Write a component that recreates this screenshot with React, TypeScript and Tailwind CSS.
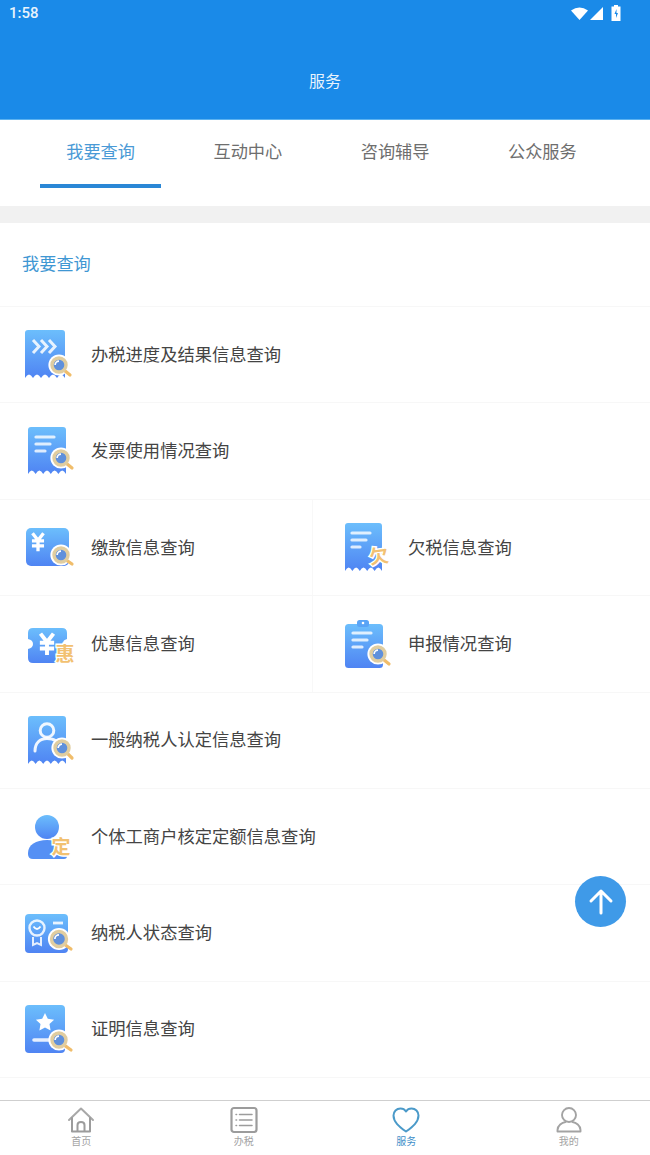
import type { ReactNode } from "react";

const tabs = ["我要查询", "互动中心", "咨询辅导", "公众服务"];
const fill = "url(#iconBlue)";

// receipt shape with a wavy bottom edge
function receiptPath(x0: number, x1: number, y0: number, y1: number) {
  const n = 5;
  const step = (x1 - x0) / n;
  let d = `M${x0 + 3} ${y0}H${x1 - 3}Q${x1} ${y0} ${x1} ${y0 + 3}V${y1}`;
  for (let i = 0; i < n; i++) {
    d += `q${-step / 2} -7 ${-step} 0`;
  }
  return d + `V${y0 + 3}Q${x0} ${y0} ${x0 + 3} ${y0}Z`;
}

function Lens({ x, y, r = 7, hx, hy }: { x: number; y: number; r?: number; hx: number; hy: number }) {
  return (
    <g>
      <circle cx={x} cy={y} r={r + 3.6} fill="#fff" />
      <line x1={x + r * 0.7} y1={y + r * 0.7} x2={hx} y2={hy} stroke="#f0bd6b" strokeWidth="3.2" strokeLinecap="round" />
      <circle cx={x} cy={y} r={r} fill="#5f90dc" stroke="#e0cda0" strokeWidth="3.4" />
      <path d={`M${x - r * 0.55} ${y}a${r * 0.55} ${r * 0.55} 0 0 1 ${r * 0.55} ${-r * 0.55}`} fill="none" stroke="#fff" strokeWidth="1.7" />
    </g>
  );
}

function Lines({ x, y, w }: { x: number; y: number[]; w: number[] }) {
  return (
    <g stroke="#fff" strokeOpacity="0.8" strokeWidth="3.2" strokeLinecap="round">
      {y.map((v, i) => (
        <line key={v} x1={x} y1={v} x2={x + w[i]} y2={v} />
      ))}
    </g>
  );
}

function Yen({ x, y, s = 1 }: { x: number; y: number; s?: number }) {
  return (
    <path
      transform={`translate(${x} ${y}) scale(${s})`}
      d="M-5 -8L0 -1.5L5 -8M-5.5 -1H5.5M-5.5 3.5H5.5M0 -1.5V8.5"
      fill="none"
      stroke="#fff"
      strokeWidth="3"
    />
  );
}

function Badge({ x, y, children, rotate = 0 }: { x: number; y: number; children: string; rotate?: number }) {
  return (
    <text
      x={x}
      y={y}
      transform={rotate ? `rotate(${rotate} ${x} ${y})` : undefined}
      textAnchor="middle"
      fontSize="19"
      fontWeight="700"
      fill="#f2c171"
      stroke="#fff"
      strokeWidth="3"
      paintOrder="stroke"
      style={{ fontFamily: '"Noto Sans CJK SC", sans-serif' }}
    >
      {children}
    </text>
  );
}

function Icon({ children }: { children: ReactNode }) {
  return (
    <svg viewBox="0 0 56 56" className="w-14 h-14 shrink-0">
      {children}
    </svg>
  );
}

const iconProgress = (
  <Icon>
    <path d={receiptPath(5, 45, 3, 51)} fill={fill} />
    <path d="M13 13l6 6.5-6 6.5M21 13l6 6.5-6 6.5M29 13l6 6.5-6 6.5" fill="none" stroke="#fff" strokeOpacity="0.85" strokeWidth="3" />
    <Lens x={39} y={38} hx={50} hy={48} />
  </Icon>
);
const iconInvoice = (
  <Icon>
    <path d={receiptPath(8, 46, 4, 51)} fill={fill} />
    <Lines x={16} y={[14, 21, 28]} w={[18, 14, 9]} />
    <Lens x={41} y={35} hx={52} hy={45} />
  </Icon>
);
const iconPayment = (
  <Icon>
    <rect x="6" y="9" width="43" height="38" rx="5" fill={fill} />
    <Yen x={18} y={23} s={1.1} />
    <Lens x={41} y={36} hx={52} hy={45} />
  </Icon>
);
const iconDiscount = (
  <Icon>
    <path
      d="M13 12H42Q47 12 47 17V23Q43 24 43 27T47 32V42Q47 47 42 47H13Q8 47 8 42V33Q13 32 13 28T8 23V17Q8 12 13 12Z"
      fill={fill}
    />
    <Yen x={27} y={28} s={1.3} />
    <Badge x={45} y={45}>惠</Badge>
  </Icon>
);
const iconOwed = (
  <Icon>
    <path d={receiptPath(8, 45, 4, 52)} fill={fill} />
    <Lines x={15} y={[14, 21, 28]} w={[18, 14, 8]} />
    <Badge x={43} y={44} rotate={-8}>欠</Badge>
  </Icon>
);
const iconDeclare = (
  <Icon>
    <rect x="8" y="8" width="38" height="44" rx="3.5" fill={fill} />
    <rect x="20" y="4" width="12" height="7" rx="2.5" fill="#5aa4f6" />
    <circle cx="26" cy="7" r="1.3" fill="#fff" />
    <Lines x={16} y={[17, 24, 31]} w={[18, 14, 9]} />
    <Lens x={41} y={38} hx={52} hy={48} />
  </Icon>
);
const iconPerson = (
  <Icon>
    <path d={receiptPath(8, 46, 4, 52)} fill={fill} />
    <circle cx="27" cy="18.5" r="6.8" fill="none" stroke="#fff" strokeOpacity="0.9" strokeWidth="3" />
    <path d="M15 39C15 31 20 26.5 27 26.5C31 26.5 34 27.5 36 29" fill="none" stroke="#fff" strokeOpacity="0.9" strokeWidth="3" strokeLinecap="round" />
    <Lens x={42} y={36} hx={52} hy={46} />
  </Icon>
);
const iconFixed = (
  <Icon>
    <circle cx="27" cy="18" r="12" fill={fill} />
    <path d="M13 50Q8 50 8 45V44C8 36 16 31 27 31C38 31 47 36 47 44V47Q47 50 44 50Z" fill="#5590f4" />
    <Badge x={41} y={45}>定</Badge>
  </Icon>
);
const iconStatus = (
  <Icon>
    <rect x="5" y="9" width="43" height="39" rx="4" fill={fill} />
    <circle cx="17" cy="23" r="7.5" fill="none" stroke="#fff" strokeOpacity="0.85" strokeWidth="2.4" />
    <path d="M13.5 21.5q3.5 5 7 0" fill="none" stroke="#fff" strokeWidth="1.8" />
    <path d="M13 32V40L17 38L21 40V32" fill="none" stroke="#fff" strokeOpacity="0.85" strokeWidth="2" />
    <line x1="33" y1="18" x2="43" y2="18" stroke="#fff" strokeOpacity="0.85" strokeWidth="2.8" />
    <Lens x={39} y={34} r={7.5} hx={51} hy={44} />
  </Icon>
);
const iconProof = (
  <Icon>
    <rect x="5" y="4" width="40" height="48" rx="4" fill={fill} />
    <path
      d="M25 12l2.8 5.8 6.3.9-4.6 4.4 1.1 6.3-5.6-3-5.6 3 1.1-6.3-4.6-4.4 6.3-.9Z"
      fill="#fff"
    />
    <line x1="14" y1="39" x2="30" y2="39" stroke="#fff" strokeOpacity="0.85" strokeWidth="3.6" strokeLinecap="round" />
    <Lens x={39} y={39} hx={51} hy={49} />
  </Icon>
);

function Row({ icon, label }: { icon: ReactNode; label: string }) {
  return (
    <div className="flex h-[96.4px] shrink-0 items-center gap-[15px] border-b border-[#f7f7f7] pl-5">
      {icon}
      <span className="pb-[2px] text-[17.3px] text-[#444]">{label}</span>
    </div>
  );
}

function HalfRow({ left, right }: { left: [ReactNode, string]; right: [ReactNode, string] }) {
  return (
    <div className="flex h-[96.4px] shrink-0 border-b border-[#f7f7f7]">
      <div className="flex w-[313px] items-center gap-[15px] border-r border-[#f8f8f8] pl-5">
        {left[0]}
        <span className="pb-[2px] text-[17.3px] text-[#444]">{left[1]}</span>
      </div>
      <div className="flex flex-1 items-center gap-[15px] pl-6">
        {right[0]}
        <span className="pb-[2px] text-[17.3px] text-[#444]">{right[1]}</span>
      </div>
    </div>
  );
}

function NavItem({ label, active, children }: { label: string; active?: boolean; children: ReactNode }) {
  return (
    <div className="flex flex-col items-center pt-[5px]">
      <svg viewBox="0 0 28 28" className="w-7 h-7" fill="none" strokeLinejoin="round" strokeLinecap="round">
        {children}
      </svg>
      <span className={`text-[10px] leading-[14px] ${active ? "text-[#3f8fc9]" : "text-[#a3a3a3]"}`}>{label}</span>
    </div>
  );
}

export default function App() {
  return (
    <div
      className="relative flex h-[1155px] w-[650px] flex-col overflow-hidden bg-white"
      style={{ fontFamily: '"Noto Sans CJK SC", "Noto Sans", sans-serif' }}
    >
      <svg className="absolute h-0 w-0">
        <defs>
          <linearGradient id="iconBlue" x1="0" y1="0" x2="0" y2="1">
            <stop offset="0" stopColor="#6cbefc" />
            <stop offset="1" stopColor="#4f84f3" />
          </linearGradient>
        </defs>
      </svg>

      {/* header */}
      <header className="h-[120px] shrink-0 border-b border-[#5cb2f0] bg-[#1a8ae8] text-white">
        <div className="flex h-[26px] items-center justify-between pl-[9px] pr-[29px]">
          <span className="text-[15px] font-medium opacity-90" style={{ fontFamily: "Roboto, sans-serif" }}>
            1:58
          </span>
          <div className="flex items-center">
            <svg viewBox="0 0 17 13" className="h-[13px] w-[17px]">
              <path d="M0 3.5Q8.5 -2.5 17 3.5L8.5 13Z" fill="#fff" />
            </svg>
            <svg viewBox="0 0 13 13" className="ml-[2px] h-[13px] w-[13px]">
              <path d="M13 0V13H0Z" fill="#fff" />
            </svg>
            <svg viewBox="0 0 10 16" className="ml-2 h-4 w-[10px]">
              <path d="M3 0H7V1.5H9.5V16H.5V1.5H3Z" fill="#fff" />
              <path d="M5.5 4L3.5 9H5V13L7 8H5.5Z" fill="#1a8ae8" />
            </svg>
          </div>
        </div>
        <div className="mt-[25px] flex h-[58px] items-center justify-center text-[16px] opacity-90">服务</div>
      </header>

      {/* tabs */}
      <nav className="grid h-[86px] shrink-0 grid-cols-4 pl-[27px] pr-[34px]">
        {tabs.map((tab, i) => (
          <div key={tab} className="relative flex h-[64px] items-center justify-center">
            <span className={`pb-[2px] text-[17.2px] ${i === 0 ? "text-[#4a9ad6]" : "text-[#6e6e6e]"}`}>{tab}</span>
            {i === 0 && <span className="absolute left-[13px] top-[64px] h-1 w-[121px] bg-[#2a87d6]" />}
          </div>
        ))}
      </nav>
      <div className="h-[17px] shrink-0 bg-[#f1f1f1]" />

      {/* list */}
      <main className="flex min-h-0 flex-1 flex-col overflow-hidden">
        <div className="flex h-[84px] shrink-0 items-center border-b border-[#f7f7f7] pb-1 pl-[22px] text-[17.2px] text-[#3f97d3]">
          我要查询
        </div>
        <Row icon={iconProgress} label="办税进度及结果信息查询" />
        <Row icon={iconInvoice} label="发票使用情况查询" />
        <HalfRow left={[iconPayment, "缴款信息查询"]} right={[iconOwed, "欠税信息查询"]} />
        <HalfRow left={[iconDiscount, "优惠信息查询"]} right={[iconDeclare, "申报情况查询"]} />
        <Row icon={iconPerson} label="一般纳税人认定信息查询" />
        <Row icon={iconFixed} label="个体工商户核定定额信息查询" />
        <Row icon={iconStatus} label="纳税人状态查询" />
        <Row icon={iconProof} label="证明信息查询" />
      </main>

      {/* back to top */}
      <div className="absolute left-[575px] top-[876px] flex h-[51px] w-[51px] items-center justify-center rounded-full bg-[#3f9ae8]">
        <svg viewBox="0 0 28 28" className="h-7 w-7" fill="none" stroke="#fff" strokeWidth="3" strokeLinecap="round" strokeLinejoin="round">
          <path d="M14 25V3M4 13L14 3L24 13" />
        </svg>
      </div>

      {/* bottom nav */}
      <footer className="grid h-[55px] shrink-0 grid-cols-4 border-t border-[#cfcfcf] bg-white">
        <NavItem label="首页">
          <path d="M2 14L14 2.5L26 14" stroke="#a8a8a8" strokeWidth="2" />
          <path d="M5 12V25.5H23V12M10.5 25.5V19Q10.5 16 14 16T17.5 19V25.5" stroke="#9c9c9c" strokeWidth="2" />
        </NavItem>
        <NavItem label="办税">
          <rect x="1.5" y="2" width="25" height="24" rx="2.5" stroke="#9c9c9c" strokeWidth="2.2" />
          <path d="M9.5 8.5H22M9.5 14H22M9.5 19.5H22" stroke="#9c9c9c" strokeWidth="1.5" />
          <path d="M6 8.5H6.6M6 14H6.6M6 19.5H6.6" stroke="#9c9c9c" strokeWidth="1.5" />
        </NavItem>
        <NavItem label="服务" active>
          <path
            d="M14 25.5C7 20.5 1.5 16 1.5 9.5C1.5 5.5 4.5 2.5 8.5 2.5C10.8 2.5 12.8 3.6 14 5.4C15.2 3.6 17.2 2.5 19.5 2.5C23.5 2.5 26.5 5.5 26.5 9.5C26.5 16 21 20.5 14 25.5Z"
            stroke="#4b9ac9"
            strokeWidth="2"
          />
        </NavItem>
        <NavItem label="我的">
          <circle cx="14" cy="9" r="7" stroke="#a3a3a3" strokeWidth="1.9" />
          <path d="M2.5 25.5V24C2.5 19.5 7 16.5 10.5 16M25.5 25.5V24C25.5 19.5 21 16.5 17.5 16M2.5 25.5H25.5" stroke="#a3a3a3" strokeWidth="1.9" />
        </NavItem>
      </footer>
    </div>
  );
}
